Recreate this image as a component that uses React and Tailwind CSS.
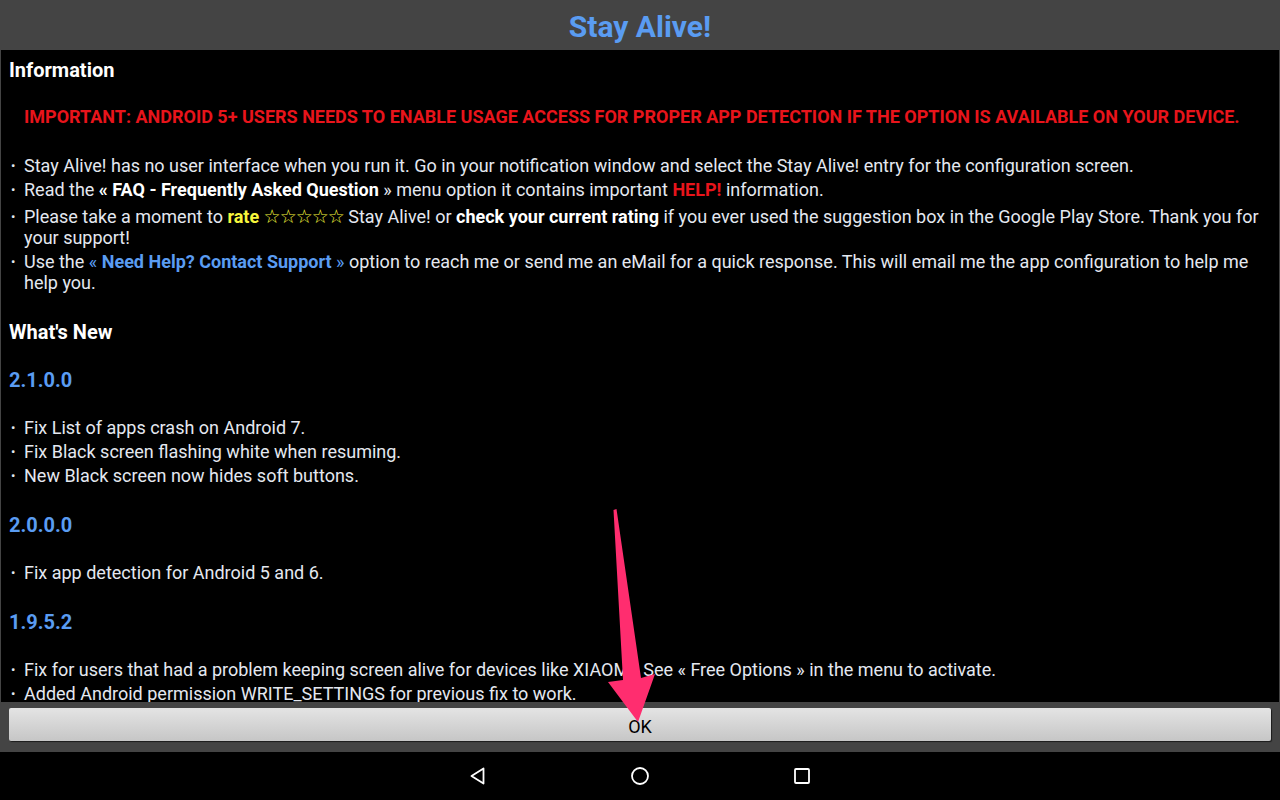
import React from 'react'

const FONT = { fontFamily: 'Roboto, "Liberation Sans", sans-serif' }

function Item({ children, className = '' }) {
    return (
        <li className={`flex mb-[3px] ${className}`}>
            <span className="w-[23px] shrink-0 pl-[10px] text-[13px] leading-[21px]">•</span>
            <span className="flex-1 pr-[20px]">{children}</span>
        </li>
    )
}

function Version({ children }) {
    return <div className="pl-[8px] text-[20px] font-bold leading-[24px] text-[#5a9cf2] mb-[24.5px]">{children}</div>
}

function Heading({ children, className = '' }) {
    return <div className={`pl-[8px] text-[20px] font-bold leading-[24px] text-white ${className}`}>{children}</div>
}

export default function App() {
    return (
        <div className="relative w-[1280px] h-[800px] bg-black flex flex-col overflow-hidden" style={FONT}>
            {/* titre */}
            <div className="h-[50px] shrink-0 bg-[#444444] flex items-center justify-center pt-[2px]">
                <span className="text-[30px] font-bold text-[#5a9cf2]">Stay Alive!</span>
            </div>

            {/* contenu */}
            <div className="h-[652px] shrink-0 overflow-hidden bg-black border-x border-[#444444] pt-[8px] text-[18px] leading-[21px] text-[#e4e8f0]">
                <Heading className="mb-[23px]">Information</Heading>
                <div className="pl-[23px] text-[18px] font-bold leading-[24px] text-[#e8141b] mb-[25.5px]">
                    IMPORTANT: ANDROID 5+ USERS NEEDS TO ENABLE USAGE ACCESS FOR PROPER APP DETECTION IF THE OPTION IS AVAILABLE ON YOUR DEVICE.
                </div>
                <ul className="mb-[27.5px]">
                    <Item>Stay Alive! has no user interface when you run it. Go in your notification window and select the Stay Alive! entry for the configuration screen.</Item>
                    <Item>Read the <b className="text-white">« FAQ - Frequently Asked Question</b> » menu option it contains important <b className="text-[#e8141b]">HELP!</b> information.</Item>
                    <Item className="mt-[6px]">
                        Please take a moment to <b className="text-[#f6f63c]">rate</b>{' '}
                        <span className="text-[#f6f63c] text-[19px] leading-[21px] tracking-[-1px]" style={{ fontFamily: '"DejaVu Sans", sans-serif' }}>☆☆☆☆☆</span>{' '}
                        Stay Alive! or <b className="text-white">check your current rating</b> if you ever used the suggestion box in the Google Play Store. Thank you for your support!
                    </Item>
                    <Item>Use the <span className="text-[#5a9cf2]">« <b>Need Help? Contact Support</b> »</span> option to reach me or send me an eMail for a quick response. This will email me the app configuration to help me help you.</Item>
                </ul>

                <Heading className="mb-[24px]">What's New</Heading>

                <Version>2.1.0.0</Version>
                <ul className="mb-[27.5px]">
                    <Item>Fix List of apps crash on Android 7.</Item>
                    <Item>Fix Black screen flashing white when resuming.</Item>
                    <Item>New Black screen now hides soft buttons.</Item>
                </ul>

                <Version>2.0.0.0</Version>
                <ul className="mb-[27.5px]">
                    <Item>Fix app detection for Android 5 and 6.</Item>
                </ul>

                <Version>1.9.5.2</Version>
                <ul>
                    <Item>Fix for users that had a problem keeping screen alive for devices like XIAOMI. See « Free Options » in the menu to activate.</Item>
                    <Item>Added Android permission WRITE_SETTINGS for previous fix to work.</Item>
                </ul>
            </div>

            {/* bouton */}
            <div className="h-[50px] shrink-0 bg-[#444444] px-[9px] pt-[6px]">
                <button className="w-full h-[33px] rounded-[2px] bg-gradient-to-b from-[#e4e4e4] to-[#c6c6c6] shadow-[1px_1px_1px_rgba(0,0,0,0.6)] text-[18px] text-black leading-[33px] pt-[2px]">
                    OK
                </button>
            </div>

            {/* navigation */}
            <div className="flex-1 bg-black flex items-center justify-center gap-[142px]">
                <svg width="20" height="20" viewBox="0 0 20 20">
                    <path d="M15.5 2.5 L3.5 10 L15.5 17.5 Z" fill="none" stroke="#fff" strokeWidth="1.8" strokeLinejoin="round" />
                </svg>
                <svg width="20" height="20" viewBox="0 0 20 20">
                    <circle cx="10" cy="10" r="8" fill="none" stroke="#fff" strokeWidth="1.8" />
                </svg>
                <svg width="20" height="20" viewBox="0 0 20 20">
                    <rect x="3" y="3" width="14" height="14" rx="1" fill="none" stroke="#fff" strokeWidth="1.8" />
                </svg>
            </div>

            {/* flèche annotée */}
            <svg className="absolute left-0 top-0 pointer-events-none" width="1280" height="800">
                <path d="M613.5 510 L616.5 509 L641 678 L655 674 L638 722 L608 682 L623 680 Z" fill="#ff2d6f" />
            </svg>
        </div>
    )
}
